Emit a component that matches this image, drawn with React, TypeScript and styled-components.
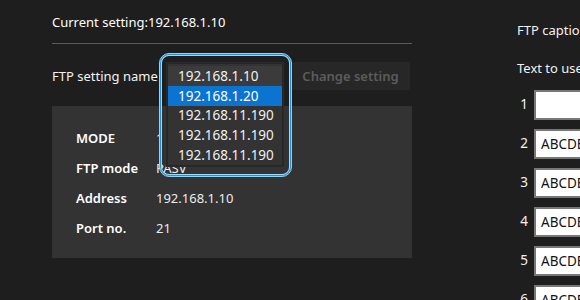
import React from "react";
import styled, { createGlobalStyle } from "styled-components";

const Global = createGlobalStyle`
  html, body { margin: 0; padding: 0; background: #1e1e1e; overflow: hidden; }
  body { font-family: "Noto Sans", "Open Sans", sans-serif; font-size: 13px; color: #f2f2f2; }
`;

const Page = styled.div`
  display: flex;
  width: 580px;
  height: 300px;
  overflow: hidden;
  background: #1e1e1e;
`;

const LeftCol = styled.div`
  width: 360px;
  margin-left: 52px;
  flex-shrink: 0;
  display: flex;
  flex-direction: column;
`;

const Header = styled.div`
  height: 43px;
  border-bottom: 1px solid #5a5a5a;
  box-sizing: content-box;
  display: flex;
  align-items: center;
  padding-top: 4px;
  margin-top: -4px;
  color: #ffffff;
`;

const SettingRow = styled.div`
  position: relative;
  margin-top: 18px;
  height: 28px;
  display: flex;
  align-items: center;
  justify-content: space-between;
`;

const Label = styled.span`
  color: #f2f2f2;
`;

const GhostButton = styled.button`
  width: 119px;
  height: 28px;
  margin-right: 2px;
  border: none;
  background: #272727;
  color: #5c5c5c;
  font-family: inherit;
  font-size: 13px;
  font-weight: 600;
  padding: 0;
`;

const Panel = styled.div`
  margin-top: 16px;
  height: 152px;
  box-sizing: border-box;
  padding: 17px 24px 15px;
  background: #333333;
  display: flex;
  flex-direction: column;
`;

const InfoRow = styled.div`
  height: 30px;
  display: flex;
  align-items: center;
`;

const InfoLabel = styled.span`
  width: 80px;
  font-weight: 600;
  color: #ffffff;
`;

const InfoValue = styled.span`
  color: #ececec;
`;

const Ring = styled.div`
  position: absolute;
  left: 107px;
  top: -9px;
  width: 133px;
  height: 124px;
  box-sizing: border-box;
  border: 1px solid #8fd3f7;
  border-radius: 10px;
  box-shadow: inset 0 0 0 1px #1f8fd6, inset 0 0 0 2px #9adcff;
  background: transparent;
  padding: 9px 8px 10px 7px;
  z-index: 2;
`;

const ListBox = styled.div`
  height: 103px;
  box-sizing: border-box;
  background: #333333;
  border: 1px solid #262626;
  box-shadow: 0 0 0 1px #2a2a2a;
  padding-top: 2px;
  display: flex;
  flex-direction: column;
`;

const Option = styled.div<{ $state?: "hover" | "selected" }>`
  height: 20px;
  display: flex;
  align-items: center;
  padding-left: 10px;
  font-size: 13.5px;
  color: ${(p) => (p.$state === "selected" ? "#ffffff" : "#f0f0f0")};
  background: ${(p) =>
    p.$state === "selected" ? "#0a74d0" : p.$state === "hover" ? "#3b3b3b" : "transparent"};
`;

const RightCol = styled.div`
  margin-left: 105px;
  flex-shrink: 0;
  width: 200px;
  display: flex;
  flex-direction: column;
`;

const RightTitle = styled.div`
  margin-top: 20px;
  height: 20px;
  line-height: 20px;
  white-space: nowrap;
  color: #f2f2f2;
`;

const RightSub = styled.div`
  margin-top: 18px;
  height: 20px;
  line-height: 20px;
  white-space: nowrap;
  color: #f2f2f2;
`;

const TextRows = styled.div`
  margin-top: 12px;
  margin-left: -4px;
  display: flex;
  flex-direction: column;
  gap: 9px;
`;

const TextRow = styled.div`
  display: flex;
  align-items: center;
  height: 30px;
`;

const RowNum = styled.span`
  width: 21px;
  text-align: right;
  padding-right: 6px;
  box-sizing: border-box;
  color: #f2f2f2;
  font-size: 13.5px;
  margin-top: -2px;
`;

const TextBox = styled.div`
  width: 150px;
  height: 30px;
  box-sizing: border-box;
  background: #ffffff;
  border: 2px solid #777777;
  display: flex;
  align-items: center;
  padding-left: 5px;
  color: #111111;
  font-size: 13.5px;
  white-space: nowrap;
`;

const options = ["192.168.1.10", "192.168.1.20", "192.168.11.190", "192.168.11.190", "192.168.11.190"];
const info: [string, string][] = [
  ["MODE", "1"],
  ["FTP mode", "PASV"],
  ["Address", "192.168.1.10"],
  ["Port no.", "21"],
];
const texts = ["", "ABCDEFGHIJ", "ABCDEFGHIJ", "ABCDEFGHIJ", "ABCDEFGHIJ", "ABCDEFGHIJ"];

export default function App() {
  return (
    <>
      <Global />
      <Page>
        <LeftCol>
          <Header>Current setting:192.168.1.10</Header>
          <SettingRow>
            <Label>FTP setting name</Label>
            <GhostButton>Change setting</GhostButton>
            <Ring>
              <ListBox>
                {options.map((o, i) => (
                  <Option key={i} $state={i === 0 ? "hover" : i === 1 ? "selected" : undefined}>
                    {o}
                  </Option>
                ))}
              </ListBox>
            </Ring>
          </SettingRow>
          <Panel>
            {info.map(([k, v]) => (
              <InfoRow key={k}>
                <InfoLabel>{k}</InfoLabel>
                <InfoValue>{v}</InfoValue>
              </InfoRow>
            ))}
          </Panel>
        </LeftCol>
        <RightCol>
          <RightTitle>FTP caption setting</RightTitle>
          <RightSub>Text to use for caption</RightSub>
          <TextRows>
            {texts.map((t, i) => (
              <TextRow key={i}>
                <RowNum>{i + 1}</RowNum>
                <TextBox>{t}</TextBox>
              </TextRow>
            ))}
          </TextRows>
        </RightCol>
      </Page>
    </>
  );
}
